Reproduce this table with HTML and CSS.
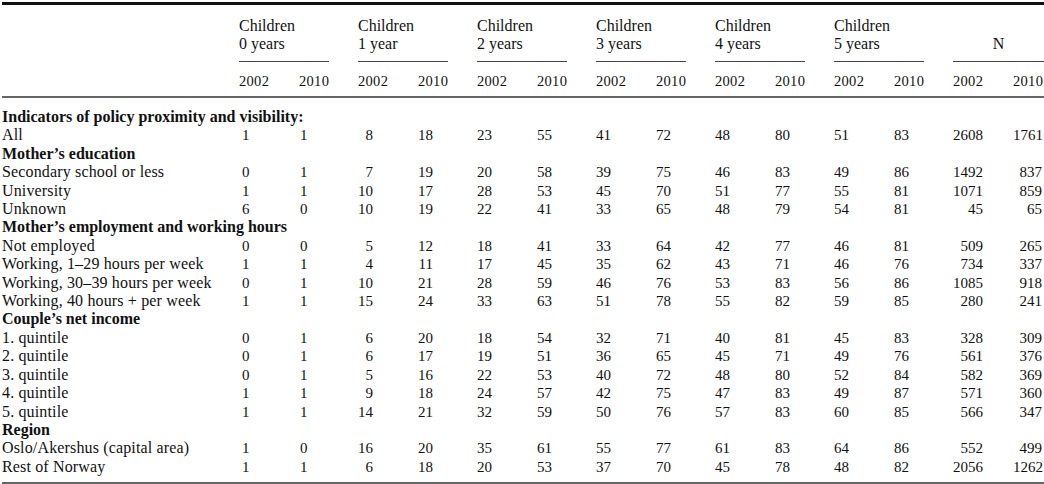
FILE: index.html
```html
<!DOCTYPE html>
<html lang="en">
<head>
<meta charset="utf-8">
<title>Children table</title>
<link rel="stylesheet" href="styles.css">
</head>
<body>
<div class="frame">
<div class="toprule"></div>
<table class="tbl">
  <colgroup>
    <col class="c-label">
    <col class="c-a"><col class="c-b">
    <col class="c-a"><col class="c-b">
    <col class="c-a"><col class="c-b">
    <col class="c-a"><col class="c-b">
    <col class="c-a"><col class="c-b">
    <col class="c-a"><col class="c-b">
    <col class="c-a"><col class="c-n">
  </colgroup>
  <thead>
    <tr class="grp">
      <th></th>
      <th colspan="2"><span class="gl">Children<br>0 years</span></th>
      <th colspan="2"><span class="gl">Children<br>1 year</span></th>
      <th colspan="2"><span class="gl">Children<br>2 years</span></th>
      <th colspan="2"><span class="gl">Children<br>3 years</span></th>
      <th colspan="2"><span class="gl">Children<br>4 years</span></th>
      <th colspan="2"><span class="gl">Children<br>5 years</span></th>
      <th colspan="2"><span class="gl gl-n">N</span></th>
    </tr>
    <tr class="yr">
      <th></th>
      <th>2002</th><th>2010</th>
      <th>2002</th><th>2010</th>
      <th>2002</th><th>2010</th>
      <th>2002</th><th>2010</th>
      <th>2002</th><th>2010</th>
      <th>2002</th><th>2010</th>
      <th>2002</th><th>2010</th>
    </tr>
  </thead>
  <tbody>
    <tr class="sec first"><td colspan="15">Indicators of policy proximity and visibility:</td></tr>
    <tr class="row"><td>All</td><td>1</td><td>1</td><td>8</td><td>18</td><td>23</td><td>55</td><td>41</td><td>72</td><td>48</td><td>80</td><td>51</td><td>83</td><td>2608</td><td>1761</td></tr>
    <tr class="sec"><td colspan="15">Mother’s education</td></tr>
    <tr class="row"><td>Secondary school or less</td><td>0</td><td>1</td><td>7</td><td>19</td><td>20</td><td>58</td><td>39</td><td>75</td><td>46</td><td>83</td><td>49</td><td>86</td><td>1492</td><td>837</td></tr>
    <tr class="row"><td>University</td><td>1</td><td>1</td><td>10</td><td>17</td><td>28</td><td>53</td><td>45</td><td>70</td><td>51</td><td>77</td><td>55</td><td>81</td><td>1071</td><td>859</td></tr>
    <tr class="row"><td>Unknown</td><td>6</td><td>0</td><td>10</td><td>19</td><td>22</td><td>41</td><td>33</td><td>65</td><td>48</td><td>79</td><td>54</td><td>81</td><td>45</td><td>65</td></tr>
    <tr class="sec"><td colspan="15">Mother’s employment and working hours</td></tr>
    <tr class="row"><td>Not employed</td><td>0</td><td>0</td><td>5</td><td>12</td><td>18</td><td>41</td><td>33</td><td>64</td><td>42</td><td>77</td><td>46</td><td>81</td><td>509</td><td>265</td></tr>
    <tr class="row"><td>Working, 1–29 hours per week</td><td>1</td><td>1</td><td>4</td><td>11</td><td>17</td><td>45</td><td>35</td><td>62</td><td>43</td><td>71</td><td>46</td><td>76</td><td>734</td><td>337</td></tr>
    <tr class="row"><td>Working, 30–39 hours per week</td><td>0</td><td>1</td><td>10</td><td>21</td><td>28</td><td>59</td><td>46</td><td>76</td><td>53</td><td>83</td><td>56</td><td>86</td><td>1085</td><td>918</td></tr>
    <tr class="row"><td>Working, 40 hours + per week</td><td>1</td><td>1</td><td>15</td><td>24</td><td>33</td><td>63</td><td>51</td><td>78</td><td>55</td><td>82</td><td>59</td><td>85</td><td>280</td><td>241</td></tr>
    <tr class="sec"><td colspan="15">Couple’s net income</td></tr>
    <tr class="row"><td>1. quintile</td><td>0</td><td>1</td><td>6</td><td>20</td><td>18</td><td>54</td><td>32</td><td>71</td><td>40</td><td>81</td><td>45</td><td>83</td><td>328</td><td>309</td></tr>
    <tr class="row"><td>2. quintile</td><td>0</td><td>1</td><td>6</td><td>17</td><td>19</td><td>51</td><td>36</td><td>65</td><td>45</td><td>71</td><td>49</td><td>76</td><td>561</td><td>376</td></tr>
    <tr class="row"><td>3. quintile</td><td>0</td><td>1</td><td>5</td><td>16</td><td>22</td><td>53</td><td>40</td><td>72</td><td>48</td><td>80</td><td>52</td><td>84</td><td>582</td><td>369</td></tr>
    <tr class="row"><td>4. quintile</td><td>1</td><td>1</td><td>9</td><td>18</td><td>24</td><td>57</td><td>42</td><td>75</td><td>47</td><td>83</td><td>49</td><td>87</td><td>571</td><td>360</td></tr>
    <tr class="row"><td>5. quintile</td><td>1</td><td>1</td><td>14</td><td>21</td><td>32</td><td>59</td><td>50</td><td>76</td><td>57</td><td>83</td><td>60</td><td>85</td><td>566</td><td>347</td></tr>
    <tr class="sec"><td colspan="15">Region</td></tr>
    <tr class="row"><td>Oslo/Akershus (capital area)</td><td>1</td><td>0</td><td>16</td><td>20</td><td>35</td><td>61</td><td>55</td><td>77</td><td>61</td><td>83</td><td>64</td><td>86</td><td>552</td><td>499</td></tr>
    <tr class="row last"><td>Rest of Norway</td><td>1</td><td>1</td><td>6</td><td>18</td><td>20</td><td>53</td><td>37</td><td>70</td><td>45</td><td>78</td><td>48</td><td>82</td><td>2056</td><td>1262</td></tr>
  </tbody>
</table>
</div>
</body>
</html>
```

FILE: styles.css
```css
html, body {
  margin: 0;
  padding: 0;
  background: #fff;
}

body {
  font-family: "Liberation Serif", "Times New Roman", serif;
  color: #111;
  padding-top: 2px;
}

.frame {
  margin-left: 2px;
  width: 1042px;
}

.toprule {
  height: 3px;
  background: #111;
}

.tbl {
  width: 1042px;
  table-layout: fixed;
  border-collapse: collapse;
  border-spacing: 0;
}

.c-label { width: 237px; }
.c-a { width: 60px; }
.c-b { width: 59px; }
.c-n { width: 31px; }

.tbl th,
.tbl td {
  padding: 0;
  font-weight: normal;
  text-align: left;
  white-space: nowrap;
}

/* group header row */
.grp th {
  vertical-align: bottom;
  padding-top: 12px;
  font-size: 16px;
  line-height: 18px;
}

.gl {
  display: block;
  width: 90px;
  padding-bottom: 8px;
  border-bottom: 1px solid #444;
}

.gl-n {
  width: 91px;
  text-align: center;
}

/* year row */
.yr {
  border-bottom: 2px solid #666;
}

.yr th {
  vertical-align: baseline;
  font-size: 14.5px;
  line-height: 18px;
  padding-top: 10px;
  padding-bottom: 6px;
  letter-spacing: 0.3px;
}

/* body rows */
.tbl tbody td {
  vertical-align: baseline;
  font-size: 16px;
  line-height: 18.4px;
  letter-spacing: 0.15px;
}

.sec td {
  font-weight: bold;
}

.tbl tbody .sec td {
  font-size: 16px;
  letter-spacing: 0;
}

.tbl tbody .first td {
  padding-top: 10px;
}

.last {
  border-bottom: 2px solid #666;
}

.tbl tbody .last td {
  padding-bottom: 6px;
}

.tbl tbody .row td:not(:first-child) {
  font-size: 15px;
  letter-spacing: 0;
  text-align: right;
}

.tbl tbody .row td:nth-child(2) {
  text-align: left;
  padding-left: 3px;
}

.tbl tbody .row td:nth-child(3) {
  text-align: left;
  padding-left: 1px;
}

.tbl tbody .row td:nth-child(2n+4) {
  padding-right: 45px;
}

.tbl tbody .row td:nth-child(2n+5) {
  padding-right: 44px;
}

.tbl tbody .row td:nth-child(14) {
  padding-right: 30px;
}

.tbl tbody .row td:nth-child(15) {
  padding-right: 2px;
}
```
